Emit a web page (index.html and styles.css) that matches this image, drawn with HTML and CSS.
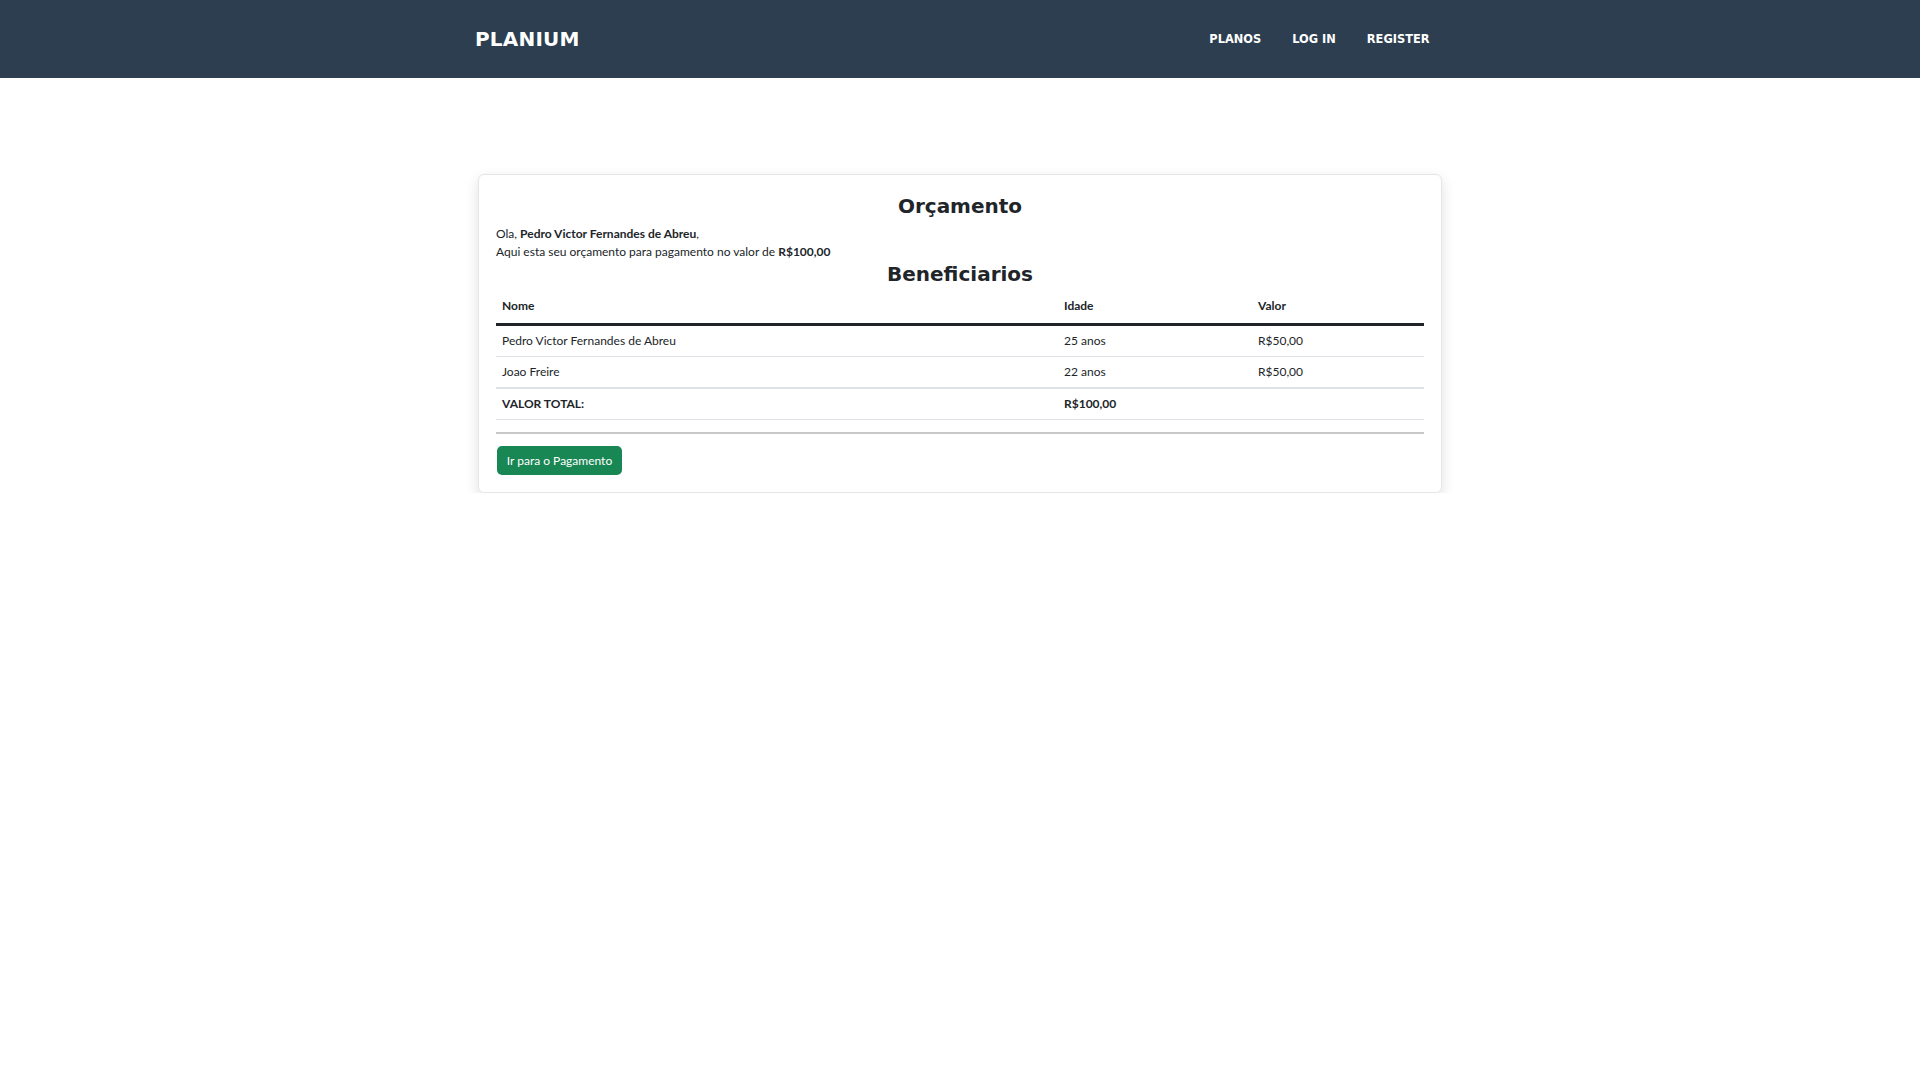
FILE: index.html
```html
<!DOCTYPE html>
<html lang="pt-BR">
<head>
<meta charset="utf-8">
<title>Planium - Orçamento</title>
<link rel="stylesheet" href="styles.css">
</head>
<body>
<nav class="navbar">
  <div class="nav-container">
    <a class="brand" href="#">PLANIUM</a>
    <ul class="nav-links">
      <li><a href="#">PLANOS</a></li>
      <li><a href="#">LOG IN</a></li>
      <li><a href="#">REGISTER</a></li>
    </ul>
  </div>
</nav>
<main class="main">
  <section class="card">
    <h2 class="card-title">Orçamento</h2>
    <p class="intro">Ola, <strong>Pedro Victor Fernandes de Abreu</strong>,<br>Aqui esta seu orçamento para pagamento no valor de <strong>R$100,00</strong></p>
    <h2 class="card-title">Beneficiarios</h2>
    <table class="table">
      <thead>
        <tr><th class="col-nome">Nome</th><th class="col-idade">Idade</th><th>Valor</th></tr>
      </thead>
      <tbody>
        <tr><td>Pedro Victor Fernandes de Abreu</td><td>25 anos</td><td>R$50,00</td></tr>
        <tr class="last-row"><td>Joao Freire</td><td>22 anos</td><td>R$50,00</td></tr>
        <tr class="total-row"><td>VALOR TOTAL:</td><td>R$100,00</td><td></td></tr>
      </tbody>
    </table>
    <hr class="divider">
    <button class="btn-pay" type="button">Ir para o Pagamento</button>
  </section>
</main>
</body>
</html>
```
FILE: styles.css
```css
* { box-sizing: border-box; }
html, body { margin: 0; padding: 0; }
body {
  font-family: Lato, "Liberation Sans", sans-serif;
  color: #212529;
  background: #fff;
  font-size: 12px;
}
.navbar {
  background: #2c3e50;
  height: 78px;
}
.nav-container {
  width: 970px;
  margin: 0 auto;
  height: 100%;
  display: flex;
  align-items: center;
  justify-content: space-between;
}
.brand {
  font-family: "DejaVu Sans", "Open Sans", sans-serif;
  font-weight: 700;
  font-size: 20px;
  color: #fff;
  text-decoration: none;
  letter-spacing: 0.2px;
}
.nav-links {
  list-style: none;
  margin: 0;
  padding: 0 0 1px;
  display: flex;
}
.nav-links a {
  display: block;
  padding: 0 15.5px;
  font-family: "DejaVu Sans", "Open Sans", sans-serif;
  font-weight: 700;
  font-size: 11.4px;
  color: #fff;
  text-decoration: none;
}
.main {
  padding-top: 96px;
}
.card {
  width: 964px;
  margin: 0 auto;
  border: 1px solid #e6e6e6;
  border-radius: 6px;
  box-shadow: 0 5px 14px rgba(0, 0, 0, 0.12);
  padding: 18px 17px 17px;
  background: #fff;
}
.card-title {
  font-family: "DejaVu Sans", "Open Sans", sans-serif;
  font-weight: 700;
  font-size: 20px;
  line-height: 26px;
  text-align: center;
  margin: 0;
  color: #212529;
}
.intro {
  margin: 6px 0 0;
  line-height: 18px;
  font-size: 12px;
}
.intro strong { font-weight: 700; }
.table {
  width: 100%;
  border-collapse: collapse;
  margin-top: 2px;
  font-size: 12px;
}
.table th, .table td {
  text-align: left;
  padding: 6px 6px;
  line-height: 18px;
  border-bottom: 1px solid #dee2e6;
}
.table th {
  font-weight: 700;
  padding-top: 8px;
  padding-bottom: 8px;
  border-bottom: 3px solid #212529;
}
.col-nome { width: 562px; }
.col-idade { width: 194px; }
.last-row td { border-bottom: 2px solid #dee2e6; }
.total-row td { font-weight: 700; }
.divider {
  border: 0;
  border-top: 2px solid #c8c8c8;
  margin: 12px 0 12px;
}
.btn-pay {
  background: #198754;
  color: #fff;
  border: 0;
  border-radius: 5px;
  font-family: Lato, "Liberation Sans", sans-serif;
  font-size: 12px;
  height: 29px;
  width: 125px;
  padding: 0;
  margin-left: 1px;
  cursor: pointer;
}
```
